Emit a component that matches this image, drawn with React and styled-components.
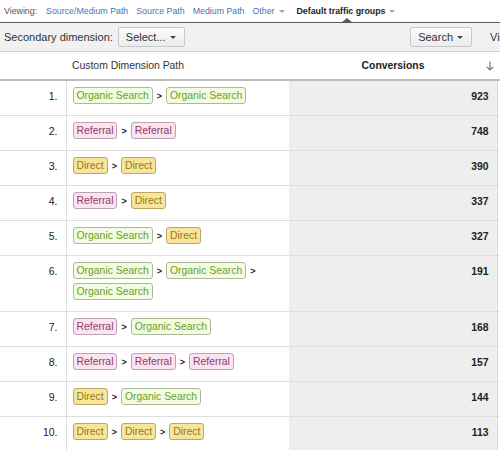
import React from 'react';
import styled, { createGlobalStyle } from 'styled-components';

const GlobalStyle = createGlobalStyle`
    html, body {
        margin: 0;
        padding: 0;
        background: #ffffff;
        overflow: hidden;
    }
    body {
        font-family: "Liberation Sans", Arial, Helvetica, sans-serif;
        color: #333;
    }
`;

const Page = styled.div`
    width: 560px;
`;

const TabBar = styled.div`
    position: relative;
    display: flex;
    align-items: center;
    height: 22px;
    padding-left: 4px;
    border-bottom: 1px solid #5a5a5a;
    font-size: 8.8px;
`;

const TabLabel = styled.span`
    color: #555;
    margin-right: 9px;
`;

const Tab = styled.span`
    display: inline-flex;
    align-items: center;
    margin-right: ${({ $gap }) => $gap || 8}px;
    color: ${({ $active }) => ($active ? '#222' : '#3d78b8')};
    font-weight: ${({ $active }) => ($active ? 'bold' : 'normal')};
    position: relative;
`;

const Caret = styled.span`
    display: inline-block;
    margin-left: 4px;
    width: 0;
    height: 0;
    border-left: 3px solid transparent;
    border-right: 3px solid transparent;
    border-top: 3px solid ${({ $dark }) => ($dark ? '#444' : '#aaa')};
`;

const Notch = styled.span`
    position: absolute;
    left: 44px;
    bottom: -7px;
    width: 0;
    height: 0;
    border-left: 6px solid transparent;
    border-right: 6px solid transparent;
    border-bottom: 5px solid #5a5a5a;
`;

const Toolbar = styled.div`
    display: flex;
    align-items: center;
    height: 28px;
    padding-left: 4px;
    background: #f1f1f1;
    border-bottom: 1px solid #cfcfcf;
    font-size: 11px;
`;

const ToolLabel = styled.span`
    color: #333;
    margin-right: 5px;
`;

const Button = styled.span`
    display: inline-flex;
    align-items: center;
    height: 18px;
    padding: 0 8px 0 7px;
    border: 1px solid #c8c8c8;
    border-radius: 2px;
    background: linear-gradient(#fbfbfb, #ececec);
    color: #333;
    font-size: 11px;
    margin-left: ${({ $push }) => ($push ? 'auto' : '0')};
`;

const ViewGroup = styled.span`
    width: 70px;
    margin-left: 18px;
    color: #333;
    font-size: 11px;
`;

const Table = styled.table`
    width: 560px;
    table-layout: fixed;
    border-collapse: collapse;
    font-size: 10.4px;
`;

const HeadCell = styled.th`
    height: 27px;
    padding: 0 6px;
    border-bottom: 2px solid #bdbdbd;
    background: #fff;
    font-weight: ${({ $bold }) => ($bold ? 'bold' : 'normal')};
    color: ${({ $bold }) => ($bold ? '#222' : '#333')};
    text-align: left;
`;

const SortHead = styled.div`
    display: grid;
    grid-template-columns: 1fr auto 1fr;
    align-items: center;
`;

const SortArrow = styled.svg`
    justify-self: end;
    margin-right: -3px;
`;

const Row = styled.tr`
    border-bottom: 1px solid #dedede;
`;

const IndexCell = styled.td`
    vertical-align: top;
    padding: 9px 8px 0 0;
    text-align: right;
    font-size: 10.5px;
    color: #222;
    border-right: 1px solid #dedede;
`;

const PathCell = styled.td`
    vertical-align: top;
    padding: 6px 6px 11px 6px;
`;

const ValueCell = styled.td`
    vertical-align: top;
    padding: 10px 8px 0 0;
    text-align: right;
    font-weight: bold;
    color: #222;
    background: #eeeeee;
    border-right: 1px solid #d8d8d8;
`;

const EmptyCell = styled.td`
    background: #fff;
`;

const Path = styled.div`
    display: flex;
    flex-wrap: wrap;
    align-items: center;
    row-gap: 4px;
`;

const chipColors = {
    organic: { bg: '#f4fbe3', border: '#abb99a', text: '#64a227' },
    referral: { bg: '#fbe4ef', border: '#bba3b0', text: '#8d3b6c' },
    direct: { bg: '#f8e59c', border: '#b8a765', text: '#957a1c' },
};

const Chip = styled.span`
    display: inline-flex;
    align-items: center;
    height: 15px;
    padding: 0 3px;
    border: 1px solid ${({ $kind }) => chipColors[$kind].border};
    border-radius: 3px;
    background: ${({ $kind }) => chipColors[$kind].bg};
    color: ${({ $kind }) => chipColors[$kind].text};
    font-size: 10.4px;
    white-space: nowrap;
`;

const Sep = styled.span`
    margin: 0 4px;
    font-size: 9px;
    font-weight: bold;
    color: #222;
`;

const labels = {
    organic: 'Organic Search',
    referral: 'Referral',
    direct: 'Direct',
};

const rows = [
    { path: ['organic', 'organic'], value: 923 },
    { path: ['referral', 'referral'], value: 748 },
    { path: ['direct', 'direct'], value: 390 },
    { path: ['referral', 'direct'], value: 337 },
    { path: ['organic', 'direct'], value: 327 },
    { path: ['organic', 'organic', 'organic'], value: 191 },
    { path: ['referral', 'organic'], value: 168 },
    { path: ['referral', 'referral', 'referral'], value: 157 },
    { path: ['direct', 'organic'], value: 144 },
    { path: ['direct', 'direct', 'direct'], value: 113 },
];

const App = () => {
    return (
        <Page>
            <GlobalStyle />
            <TabBar>
                <TabLabel>Viewing:</TabLabel>
                <Tab>Source/Medium Path</Tab>
                <Tab>Source Path</Tab>
                <Tab>Medium Path</Tab>
                <Tab $gap={12}>Other<Caret /></Tab>
                <Tab $active>
                    Default traffic groups<Caret />
                    <Notch />
                </Tab>
            </TabBar>
            <Toolbar>
                <ToolLabel>Secondary dimension:</ToolLabel>
                <Button>Select...<Caret $dark /></Button>
                <Button $push>Search<Caret $dark /></Button>
                <ViewGroup>View</ViewGroup>
            </Toolbar>
            <Table>
                <colgroup>
                    <col style={{ width: 66 }} />
                    <col style={{ width: 223 }} />
                    <col style={{ width: 208 }} />
                    <col />
                </colgroup>
                <thead>
                    <tr>
                        <HeadCell />
                        <HeadCell>Custom Dimension Path</HeadCell>
                        <HeadCell $bold>
                            <SortHead>
                                <span />
                                <span>Conversions</span>
                                <SortArrow width="8" height="10" viewBox="0 0 8 10">
                                    <path d="M4 0.5 V9 M0.8 5.8 L4 9 L7.2 5.8" fill="none" stroke="#777" strokeWidth="1.2" />
                                </SortArrow>
                            </SortHead>
                        </HeadCell>
                        <HeadCell />
                    </tr>
                </thead>
                <tbody>
                    {rows.map((row, i) => (
                        <Row key={i}>
                            <IndexCell>{i + 1}.</IndexCell>
                            <PathCell>
                                <Path>
                                    {row.path.map((kind, j) => (
                                        <React.Fragment key={j}>
                                            {j > 0 && <Sep>&gt;</Sep>}
                                            <Chip $kind={kind}>{labels[kind]}</Chip>
                                        </React.Fragment>
                                    ))}
                                </Path>
                            </PathCell>
                            <ValueCell>{row.value}</ValueCell>
                            <EmptyCell />
                        </Row>
                    ))}
                </tbody>
            </Table>
        </Page>
    );
};

export default App;
